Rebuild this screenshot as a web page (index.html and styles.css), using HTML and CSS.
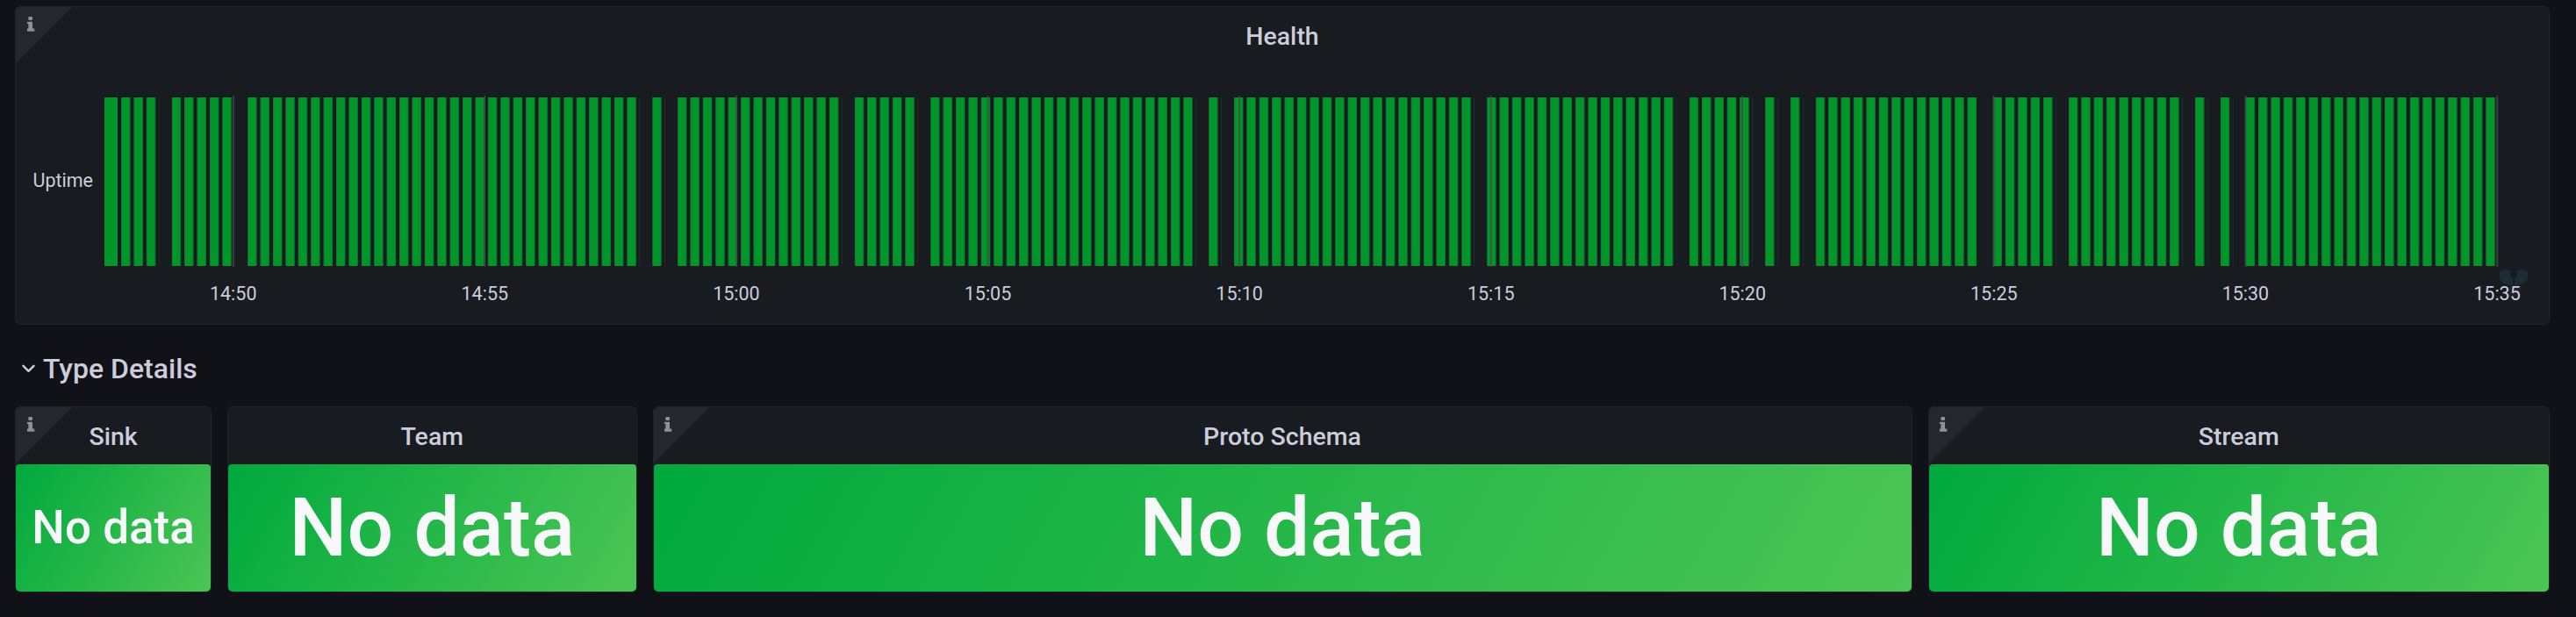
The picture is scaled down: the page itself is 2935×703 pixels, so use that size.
FILE: index.html
```html
<!DOCTYPE html>
<html lang="en">
<head>
<meta charset="utf-8">
<title>Health</title>
<link rel="stylesheet" href="styles.css">
</head>
<body>
<div class="dashboard">
  <section class="panel health">
    <div class="info-corner">
      <svg class="info-icon" viewBox="0 0 9 17"><rect x="1.3" y="0" width="4.7" height="4" rx="1.2"/><path d="M0 5.7H6V13.4H8.3V16.7H0V13.4H1.3V8H0Z"/></svg>
    </div>
    <svg class="watermark" viewBox="0 0 34 38">
      <path d="M1 5Q8 0 16 6L16 21Q6 22 1 13Z" fill="#223a44"/>
      <path d="M33 5Q26 0 18 6L18 21Q28 22 33 13Z" fill="#223a44"/>
      <path d="M8 22L26 22Q24 35 17 38Q10 35 8 22Z" fill="#2a2540"/>
      <circle cx="17" cy="8" r="4" fill="#15181d"/>
    </svg>
    <header class="panel-header"><h2 class="panel-title">Health</h2></header>
    <svg class="timeline" width="2886" height="296" viewBox="1 0 2886 296">
      <defs>
        <pattern id="bars" patternUnits="userSpaceOnUse" x="121" y="0" width="14.408" height="296">
          <rect x="0" y="38" width="10.3" height="192" fill="#00962a"/>
          <rect x="0" y="38" width="0.8" height="192" fill="#1d6e2d"/>
        </pattern>
      </defs>
      <text class="axis-label" x="89" y="139.7" text-anchor="end">Uptime</text>
      <rect class="bar" x="102" y="38" width="15" height="192"/>
      <g fill="url(#bars)">
        <rect x="121" y="38" width="43.22" height="192"/>
        <rect x="178.63" y="38" width="72.04" height="192"/>
        <rect x="265.08" y="38" width="446.65" height="192"/>
        <rect x="726.14" y="38" width="14.41" height="192"/>
        <rect x="754.95" y="38" width="187.3" height="192"/>
        <rect x="956.66" y="38" width="72.04" height="192"/>
        <rect x="1043.11" y="38" width="302.57" height="192"/>
        <rect x="1360.09" y="38" width="14.41" height="192"/>
        <rect x="1388.9" y="38" width="273.75" height="192"/>
        <rect x="1677.06" y="38" width="216.12" height="192"/>
        <rect x="1907.59" y="38" width="72.04" height="192"/>
        <rect x="1994.04" y="38" width="14.41" height="192"/>
        <rect x="2022.86" y="38" width="14.41" height="192"/>
        <rect x="2051.67" y="38" width="187.3" height="192"/>
        <rect x="2253.38" y="38" width="72.04" height="192"/>
        <rect x="2339.83" y="38" width="129.67" height="192"/>
        <rect x="2483.91" y="38" width="14.41" height="192"/>
        <rect x="2512.73" y="38" width="14.41" height="192"/>
        <rect x="2541.54" y="38" width="288.16" height="192"/>
      </g>
      <g class="gridline">
        <line x1="248.7" y1="36" x2="248.7" y2="231"/>
        <line x1="535.3" y1="36" x2="535.3" y2="231"/>
        <line x1="821.9" y1="36" x2="821.9" y2="231"/>
        <line x1="1108.5" y1="36" x2="1108.5" y2="231"/>
        <line x1="1395.1" y1="36" x2="1395.1" y2="231"/>
        <line x1="1681.7" y1="36" x2="1681.7" y2="231"/>
        <line x1="1968.2" y1="36" x2="1968.2" y2="231"/>
        <line x1="2254.8" y1="36" x2="2254.8" y2="231"/>
        <line x1="2541.4" y1="36" x2="2541.4" y2="231"/>
        <line x1="2828" y1="36" x2="2828" y2="231"/>
      </g>
      <g class="axis-label tick">
        <text x="248.7" y="268.5">14:50</text>
        <text x="535.3" y="268.5">14:55</text>
        <text x="821.9" y="268.5">15:00</text>
        <text x="1108.5" y="268.5">15:05</text>
        <text x="1395.1" y="268.5">15:10</text>
        <text x="1681.7" y="268.5">15:15</text>
        <text x="1968.2" y="268.5">15:20</text>
        <text x="2254.8" y="268.5">15:25</text>
        <text x="2541.4" y="268.5">15:30</text>
        <text x="2828" y="268.5">15:35</text>
      </g>
    </svg>
  </section>

  <div class="row-title">
    <svg class="chevron" viewBox="0 0 15 10"><path d="M1.5 1.8L7.5 7.8L13.5 1.8"/></svg>
    <span class="row-text">Type Details</span>
  </div>

  <div class="stat-grid">
    <section class="panel stat span-2">
      <div class="info-corner">
        <svg class="info-icon" viewBox="0 0 9 17"><rect x="1.3" y="0" width="4.7" height="4" rx="1.2"/><path d="M0 5.7H6V13.4H8.3V16.7H0V13.4H1.3V8H0Z"/></svg>
      </div>
      <header class="panel-header"><h2 class="panel-title">Sink</h2></header>
      <div class="stat-value small">No data</div>
    </section>
    <section class="panel stat span-4">
      <header class="panel-header"><h2 class="panel-title">Team</h2></header>
      <div class="stat-value">No data</div>
    </section>
    <section class="panel stat span-12">
      <div class="info-corner">
        <svg class="info-icon" viewBox="0 0 9 17"><rect x="1.3" y="0" width="4.7" height="4" rx="1.2"/><path d="M0 5.7H6V13.4H8.3V16.7H0V13.4H1.3V8H0Z"/></svg>
      </div>
      <header class="panel-header"><h2 class="panel-title">Proto Schema</h2></header>
      <div class="stat-value">No data</div>
    </section>
    <section class="panel stat span-6">
      <div class="info-corner">
        <svg class="info-icon" viewBox="0 0 9 17"><rect x="1.3" y="0" width="4.7" height="4" rx="1.2"/><path d="M0 5.7H6V13.4H8.3V16.7H0V13.4H1.3V8H0Z"/></svg>
      </div>
      <header class="panel-header"><h2 class="panel-title">Stream</h2></header>
      <div class="stat-value">No data</div>
    </section>
  </div>
</div>
</body>
</html>
```

FILE: styles.css
```css
* { box-sizing: border-box; }
html, body {
  margin: 0;
  background: #111217;
}
body {
  width: 2935px;
  height: 703px;
  overflow: hidden;
  font-family: Roboto, "Liberation Sans", Arial, sans-serif;
  color: #ccccdc;
}
.dashboard {
  padding: 7px 30px 0 17px;
}
.panel {
  position: relative;
  display: flex;
  flex-direction: column;
  background: #181b1f;
  border: 1px solid #212328;
  border-radius: 6px;
  overflow: hidden;
}
.health {
  height: 363px;
}
.panel-header {
  flex: none;
  height: 65px;
  padding-top: 3px;
  display: flex;
  align-items: center;
  justify-content: center;
}
.panel-title {
  margin: 0;
  font-size: 28.5px;
  font-weight: 500;
  line-height: 1;
  color: #ccccdc;
}
.info-corner {
  position: absolute;
  top: 0;
  left: 0;
  width: 64px;
  height: 64px;
  background: #24272e;
  clip-path: polygon(0 0, 100% 0, 0 100%);
}
.info-icon {
  position: absolute;
  left: 12.5px;
  top: 10.5px;
  width: 9px;
  height: 17px;
  fill: #8e8f99;
}
.timeline {
  position: relative;
  z-index: 1;
  display: block;
  flex: none;
}
.bar { fill: #00962a; }
.axis-label {
  font-family: Roboto, "Liberation Sans", sans-serif;
  font-size: 21.5px;
  fill: #ccccdc;
}
.tick { text-anchor: middle; }
.gridline {
  stroke: #46474c;
  stroke-width: 1.5;
}
.watermark {
  position: absolute;
  right: 23px;
  bottom: 27px;
  width: 34px;
  height: 38px;
  opacity: 0.55;
}
.row-title {
  height: 93px;
  padding: 6px 0 0 8px;
  display: flex;
  align-items: center;
  gap: 9px;
}
.chevron {
  width: 15px;
  height: 10px;
  fill: none;
  stroke: #ccccdc;
  stroke-width: 2.4;
  stroke-linecap: round;
  stroke-linejoin: round;
}
.row-text {
  font-size: 32px;
  font-weight: 500;
  line-height: 1;
  color: #ccccdc;
}
.stat-grid {
  display: grid;
  grid-template-columns: repeat(24, 1fr);
  column-gap: 18px;
  height: 212px;
}
.span-2 { grid-column: span 2; }
.span-4 { grid-column: span 4; }
.span-6 { grid-column: span 6; }
.span-12 { grid-column: span 12; }
.stat-value {
  flex: 1;
  display: flex;
  align-items: center;
  justify-content: center;
  border-radius: 4px;
  background: linear-gradient(120deg, #00a93d, #4cc555);
  color: #f7f8fa;
  font-size: 93px;
  font-weight: 500;
  line-height: 1;
  white-space: nowrap;
}
.stat-value.small {
  font-size: 53px;
}
```
